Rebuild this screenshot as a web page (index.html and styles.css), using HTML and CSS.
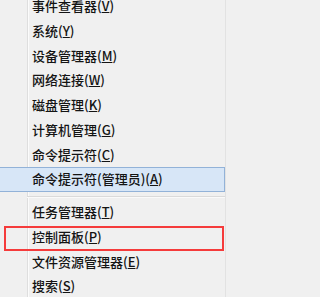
FILE: index.html
```html
<!DOCTYPE html>
<html lang="zh-CN">
<head>
<meta charset="utf-8">
<title>Win+X 菜单</title>
<link rel="stylesheet" href="styles.css">
</head>
<body>
<div class="menu">
  <ul class="group">
    <li class="item">事件查看器(<u>V</u>)</li>
    <li class="item">系统(<u>Y</u>)</li>
    <li class="item">设备管理器(<u>M</u>)</li>
    <li class="item">网络连接(<u>W</u>)</li>
    <li class="item">磁盘管理(<u>K</u>)</li>
    <li class="item">计算机管理(<u>G</u>)</li>
    <li class="item">命令提示符(<u>C</u>)</li>
    <li class="item item-hover">命令提示符(管理员)(<u>A</u>)</li>
  </ul>
  <div class="separator"></div>
  <ul class="group">
    <li class="item">任务管理器(<u>T</u>)</li>
    <li class="item item-marked">控制面板(<u>P</u>)</li>
    <li class="item">文件资源管理器(<u>E</u>)</li>
    <li class="item">搜索(<u>S</u>)</li>
  </ul>
</div>
</body>
</html>
```
FILE: styles.css
```css
html, body {
  margin: 0;
  padding: 0;
  background: #f0f0f0;
  overflow: hidden;
}

.menu {
  margin-left: -3px;
  margin-top: -6px;
  width: 228px;
  border-right: 1px solid #e2e2e2;
  background:
    linear-gradient(to right,
      transparent 30px,
      #dedede 30px, #dedede 31px,
      #fbfbfb 31px, #fbfbfb 32px,
      transparent 32px) #f0f0f0;
  font-family: "Noto Sans CJK SC", "Noto Sans", sans-serif;
  font-size: 13px;
  font-weight: 500;
  color: #141414;
}

.group {
  list-style: none;
  margin: 0;
  padding: 0;
}

.item {
  position: relative;
  box-sizing: border-box;
  height: 24.75px;
  line-height: 22.75px;
  padding-left: 34px;
  border: 1px solid transparent;
  white-space: nowrap;
}

.item u {
  text-decoration: underline;
  text-underline-offset: 1px;
  text-decoration-thickness: 1px;
}

.item-hover {
  background: #d7e6f7;
  border-color: #92b2d8;
}

.item-marked::after {
  content: "";
  position: absolute;
  left: 6px;
  right: 0;
  top: 0;
  bottom: -2px;
  border: 2px solid #f53b3b;
}

.separator {
  margin: 4px 0 2px 30px;
  height: 1px;
  background: #dadada;
  border-bottom: 1px solid #fafafa;
}
```
